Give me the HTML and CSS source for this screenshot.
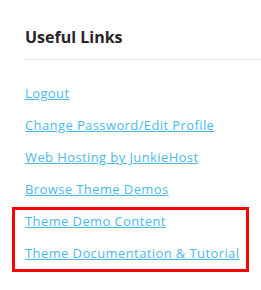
FILE: index.html
```html
<!DOCTYPE html>
<html>
<head>
<meta charset="utf-8">
<link rel="stylesheet" href="styles.css">
</head>
<body>
<div class="widget">
  <h3 class="title">Useful Links</h3>
  <ul class="links">
    <li><a href="#">Logout</a></li>
    <li><a href="#">Change Password/Edit Profile</a></li>
    <li><a href="#">Web Hosting by JunkieHost</a></li>
    <li><a href="#">Browse Theme Demos</a></li>
  </ul>
  <ul class="links boxed">
    <li><a href="#">Theme Demo Content</a></li>
    <li><a href="#">Theme Documentation &amp; Tutorial</a></li>
  </ul>
</div>
</body>
</html>
```
FILE: styles.css
```css
html, body { margin: 0; padding: 0; background: #fff; }
.widget { padding: 26px 0 0 25px; }
.title {
  margin: 0;
  font-family: "Open Sans", "Liberation Sans", sans-serif;
  font-size: 16px;
  font-weight: 700;
  color: #2b2424;
  line-height: 22px;
  padding-bottom: 11px;
  border-bottom: 1px solid #ebebeb;
}
.links { list-style: none; margin: 0; padding: 0; font-family: "Open Sans", "Liberation Sans", sans-serif; }
.links li { height: 32px; display: flex; align-items: center; }
.links:first-of-type { padding-top: 17px; }
.links a { color: #4cb9ec; font-size: 13px; letter-spacing: 0.4px; text-decoration: underline; }
.boxed {
  box-sizing: border-box;
  margin: 2px 0 0 -13px;
  width: 237px;
  border: 3px solid #f00;
  padding: 0 0 0 10px;
}
.boxed li:first-child { margin-top: -5px; }
```
